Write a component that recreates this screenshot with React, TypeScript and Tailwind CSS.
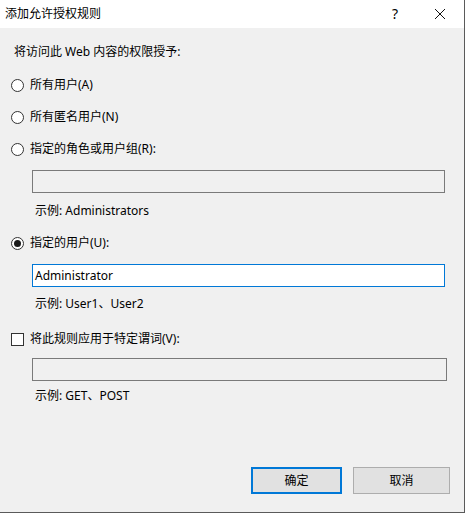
import React from "react";

const font = { fontFamily: '"Noto Sans", "Noto Sans CJK SC", sans-serif' };

function Radio({ checked }: { checked?: boolean }) {
  return (
    <span className="w-[13px] h-[13px] rounded-full border border-[#333333] bg-white flex items-center justify-center shrink-0">
      {checked && <span className="w-[7px] h-[7px] rounded-full bg-[#1a1a1a]" />}
    </span>
  );
}

export default function App() {
  return (
    <div className="w-[466px] h-[516px] bg-white text-[12px] text-black" style={font}>
      <div className="w-[465px] h-[513px] bg-[#f0f0f0] border-r border-b border-[#5a5a5a] flex flex-col">
        <div className="h-[28px] bg-white flex items-center pl-[5px] shrink-0">
          <span className="leading-[16px]">添加允许授权规则</span>
          <span className="ml-auto mr-[36px] text-[14px] leading-[16px]">?</span>
          <svg width="12" height="12" viewBox="0 0 12 12" className="mr-[18px]">
            <path d="M1 1 L11 11 M11 1 L1 11" stroke="#111" strokeWidth="1" />
          </svg>
        </div>
        <div className="flex flex-col pt-[16px]">
          <div className="h-[16px] leading-[16px] pl-[14px]">将访问此 Web 内容的权限授予:</div>
          <div className="h-[16px] mt-[17px] flex items-center pl-[11px] gap-[6px]">
            <Radio />
            <span className="leading-[16px]">所有用户(A)</span>
          </div>
          <div className="h-[16px] mt-[16px] flex items-center pl-[11px] gap-[6px]">
            <Radio />
            <span className="leading-[16px]">所有匿名用户(N)</span>
          </div>
          <div className="h-[16px] mt-[16px] flex items-center pl-[11px] gap-[6px]">
            <Radio />
            <span className="leading-[16px]">指定的角色或用户组(R):</span>
          </div>
          <div className="ml-[32px] w-[413px] h-[23px] mt-[13px] border border-[#7a7a7a] bg-[#f0f0f0]" />
          <div className="h-[16px] leading-[16px] mt-[10px] pl-[35px]">示例: Administrators</div>
          <div className="h-[16px] mt-[16px] flex items-center pl-[11px] gap-[6px]">
            <Radio checked />
            <span className="leading-[16px]">指定的用户(U):</span>
          </div>
          <div className="ml-[32px] w-[413px] h-[23px] mt-[13px] border border-[#0078d7] bg-white flex items-center pl-[2px]">
            <span className="leading-[16px]">Administrator</span>
          </div>
          <div className="h-[16px] leading-[16px] mt-[9px] pl-[35px]">示例: User1、User2</div>
          <div className="h-[16px] mt-[19px] flex items-center pl-[11px] gap-[6px]">
            <span className="w-[13px] h-[13px] border border-[#333333] bg-white shrink-0" />
            <span className="leading-[16px]">将此规则应用于特定谓词(V):</span>
          </div>
          <div className="ml-[32px] w-[415px] h-[23px] mt-[11px] border border-[#7a7a7a] bg-[#f0f0f0]" />
          <div className="h-[16px] leading-[16px] mt-[7px] pl-[35px]">示例: GET、POST</div>
          <div className="flex mt-[63px] pl-[251px] gap-[11px]">
            <button className="w-[91px] h-[27px] border-2 border-[#0078d7] bg-[#e1e1e1] flex items-center justify-center leading-[16px]">确定</button>
            <button className="w-[97px] h-[27px] border border-[#adadad] bg-[#e1e1e1] flex items-center justify-center leading-[16px]">取消</button>
          </div>
        </div>
      </div>
    </div>
  );
}
